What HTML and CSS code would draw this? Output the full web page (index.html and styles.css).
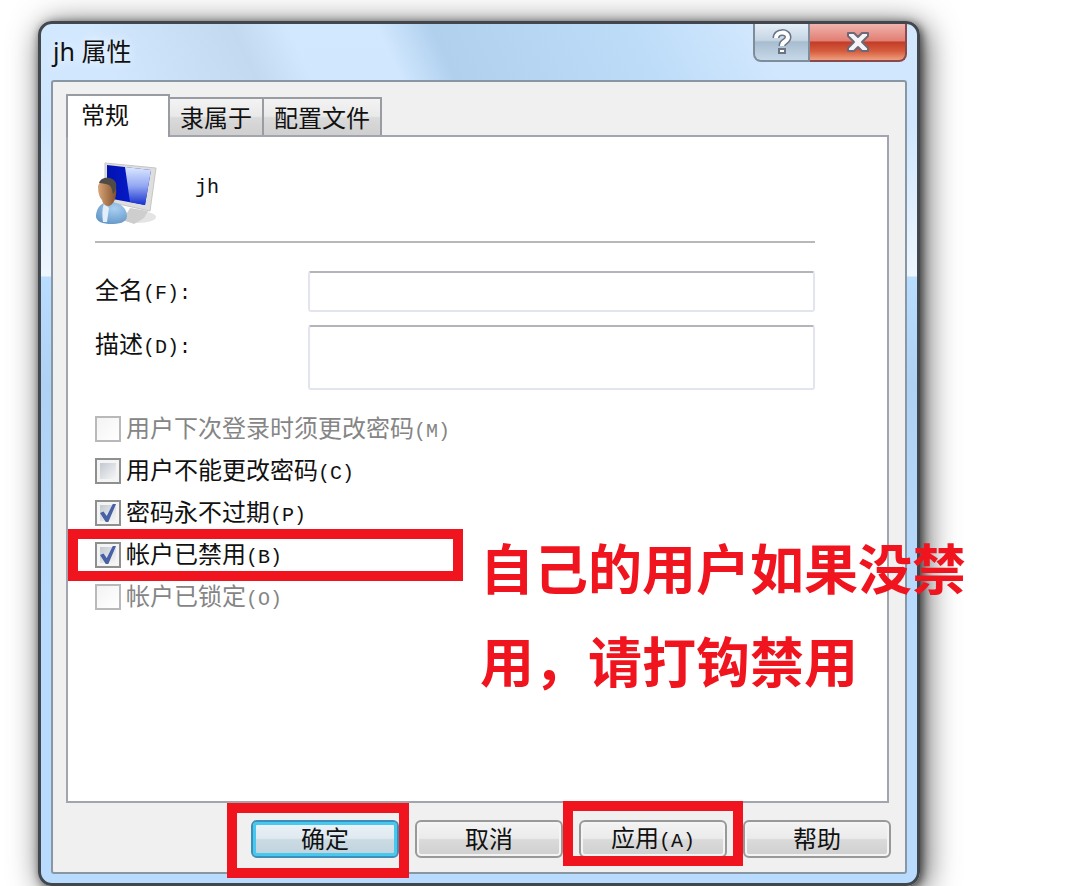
FILE: index.html
```html
<!DOCTYPE html>
<html lang="zh-CN">
<head>
  <meta charset="UTF-8">
  <meta name="viewport" content="width=device-width, initial-scale=1.0">
  <title>jh 属性</title>
  <link rel="stylesheet" href="styles.css">
</head>
<body>
  <form class="dialog">
    <header class="titlebar">
      <h1>jh 属性</h1>
      <div class="caption-buttons">
        <button type="button" class="caption-help" aria-label="帮助">
          <svg width="20" height="26" viewBox="0 0 20 26">
            <path d="M4 9C4 2 16 2 16 8c0 5-6 4-6 9" fill="none" stroke="#6b7485" stroke-width="7"/>
            <path d="M7 20h6v4H7z" fill="#fff" stroke="#6b7485" stroke-width="2"/>
            <path d="M4 9C4 2 16 2 16 8c0 5-6 4-6 9" fill="none" stroke="#fff" stroke-width="4"/>
          </svg>
        </button>
        <button type="button" class="caption-close" aria-label="关闭">
          <svg width="24" height="22" viewBox="0 0 24 22">
            <path d="M2 2h6l4 4 4-4h6v3l-6 6 6 6v3h-6l-4-4-4 4H2v-3l6-6-6-6z" fill="#f4f4f6" stroke="#6d6878" stroke-width="2" stroke-linejoin="round"/>
          </svg>
        </button>
      </div>
    </header>

    <main class="client">
      <nav class="tabs">
        <button type="button" class="tab active">常规</button>
        <button type="button" class="tab">隶属于</button>
        <button type="button" class="tab">配置文件</button>
      </nav>

      <section class="panel">
        <div class="identity">
          <svg class="user-icon" width="64" height="66" viewBox="0 0 64 66">
            <defs>
              <linearGradient id="screen" x1="0" y1="0" x2="1" y2="0">
                <stop offset="0" stop-color="#0212b0"/>
                <stop offset="1" stop-color="#0722dc"/>
              </linearGradient>
              <linearGradient id="shine" x1="0" y1="0" x2="0" y2="1">
                <stop offset="0" stop-color="#dce8ff"/>
                <stop offset="0.5" stop-color="#93a7f2"/>
                <stop offset="1" stop-color="#1730cf"/>
              </linearGradient>
              <linearGradient id="skin" x1="0" y1="0" x2="1" y2="0">
                <stop offset="0" stop-color="#d9a679"/>
                <stop offset="1" stop-color="#80502c"/>
              </linearGradient>
              <radialGradient id="shirt" cx="0.6" cy="0.3" r="0.8">
                <stop offset="0" stop-color="#a9d0f2"/>
                <stop offset="1" stop-color="#5f93c4"/>
              </radialGradient>
            </defs>
            <ellipse cx="43" cy="55" rx="18" ry="6" fill="#e4e4e4"/>
            <path d="M35 46l18 3-4 7-10 6-11-4z" fill="#cecece"/>
            <path d="M10 1l51 5-6 43-45-10z" fill="#dededc" stroke="#c6c6c4"/>
            <path d="M12 3l44 5-6 35-38-7z" fill="url(#screen)"/>
            <path d="M30 5l26 3-6 35-15-3z" fill="url(#shine)"/>
            <path d="M1 53c1-8 6-13 13-13 11 0 18 6 18 14 0 7-9 8-16 8S0 60 1 53z" fill="url(#shirt)"/>
            <path d="M9 41l5 5-2 14H8c-1-7-1-13 1-19z" fill="#e2eefa"/>
            <path d="M3 25c0-8 16-8 18 0 1 8-1 17-7 19-4 0-6-2-7-6-3-3-4-8-4-13z" fill="url(#skin)"/>
            <path d="M4 21c2-7 14-7 17 0 1 5-1 9-3 11-1-4-1-7-4-9-3-1-6-2-10-2z" fill="#504b45"/>
          </svg>
          <span class="mono">jh</span>
        </div>

        <div class="fields">
          <label for="fullname">全名<span class="mono">(F):</span></label>
          <input type="text" id="fullname">
          <label for="description">描述<span class="mono">(D):</span></label>
          <textarea id="description"></textarea>
        </div>

        <div class="options">
          <label class="option disabled">
            <input type="checkbox" disabled>
            <span>用户下次登录时须更改密码<span class="mono">(M)</span></span>
          </label>
          <label class="option">
            <input type="checkbox">
            <span>用户不能更改密码<span class="mono">(C)</span></span>
          </label>
          <label class="option">
            <input type="checkbox" checked>
            <span>密码永不过期<span class="mono">(P)</span></span>
          </label>
          <label class="option marked">
            <input type="checkbox" checked>
            <span>帐户已禁用<span class="mono">(B)</span></span>
          </label>
          <label class="option disabled">
            <input type="checkbox" disabled>
            <span>帐户已锁定<span class="mono">(O)</span></span>
          </label>
          <p class="note">自己的用户如果没禁用，请打钩禁用</p>
        </div>
      </section>

      <footer class="actions">
        <div class="action marked-ok"><button type="button" class="default">确定</button></div>
        <div class="action"><button type="button">取消</button></div>
        <div class="action marked-apply"><button type="button">应用<span class="mono">(A)</span></button></div>
        <div class="action"><button type="button">帮助</button></div>
      </footer>
    </main>
  </form>
</body>
</html>
```
FILE: styles.css
```css
*,
*::before,
*::after {
  box-sizing: border-box;
}

body {
  margin: 0;
  padding: 21px 160px 0 38px;
  background: #fff;
  color: #111;
  font: 24px/32px "Noto Sans", "Noto Sans CJK SC", sans-serif;
  overflow: hidden;
}

button,
input,
textarea {
  font: inherit;
  color: inherit;
}

.mono {
  font-family: "Liberation Mono", monospace;
  font-size: 20px;
}

.dialog {
  padding: 0 10px 9px;
  border: 3px solid #41474d;
  border-radius: 14px;
  background:
    linear-gradient(65deg, transparent 8%, #c3d9f0 24%, transparent 30%, transparent 40%, #b0d0ee 46%, #bddcf8 68%, transparent 82%) 0 0 / 100% 56px no-repeat,
    linear-gradient(#d2e8fe 0, #cfe6fe 100px, #eef6fe 252px, #b9ddff 253px, #afd1f4 360px, #b9dcfe 600px, #b9dcfe);
  box-shadow: 2px 2px 10px rgba(0, 0, 0, 0.6), 5px 5px 32px rgba(0, 0, 0, 0.7);
}

.titlebar {
  display: flex;
  justify-content: space-between;
  height: 56px;
}

.titlebar h1 {
  margin: 0;
  padding: 11px 2px;
  font-size: 25px;
  font-weight: 400;
  line-height: 32px;
  text-shadow: 0 0 12px #fff;
}

.caption-buttons {
  display: flex;
  height: 38px;
}

.caption-buttons button {
  display: flex;
  align-items: center;
  justify-content: center;
  padding: 0;
  border: 2px solid #7f8d9b;
  border-top: 0;
}

.caption-help {
  width: 57px;
  border-radius: 0 0 0 8px;
  background: linear-gradient(#e3eef8, #c6d5e3 45%, #a7bccf 50%, #c6d9ea);
}

.caption-buttons .caption-close {
  width: 97px;
  border-color: #8b4a49;
  border-left: 0;
  border-radius: 0 0 8px 0;
  background: linear-gradient(#f0b3ac, #e27e73 47%, #c23c27 50%, #d55b3c 75%, #eda080);
}

.client {
  padding: 12px 14px 14px 13px;
  border: 2px solid #8996a4;
  border-radius: 3px;
  background: #f0f0f0;
}

.tabs {
  display: flex;
  align-items: flex-end;
  height: 41px;
}

.tab {
  height: 38px;
  padding: 2px 10px 0;
  border: 2px solid #9a9ca4;
  border-left: 0;
  border-bottom: 0;
  background: linear-gradient(#f3f3f3, #e9e9e9 48%, #dadada 52%, #cfcfcf);
  line-height: 32px;
}

.tab.active {
  position: relative;
  height: 43px;
  margin-bottom: -2px;
  padding: 0 39px 4px 13px;
  border-left: 2px solid #9a9ca4;
  background: #fff;
}

.panel {
  margin-right: 2px;
  padding: 25px 72px 183px 27px;
  border: 2px solid #a2a5ad;
  background: #fff;
}

.identity {
  display: flex;
  gap: 36px;
  height: 81px;
  border-bottom: 2px solid #b8b8b8;
}

.identity .mono {
  padding-top: 10px;
}

.fields {
  display: grid;
  grid-template-columns: 200px 1fr;
  gap: 13px;
  margin-top: 28px;
}

.fields label {
  padding-top: 3px;
}

.fields input,
.fields textarea {
  display: block;
  width: 100%;
  height: 41px;
  padding: 4px 8px;
  border: 2px solid #e3e5ee;
  border-top-color: #b4b5bb;
  border-radius: 3px;
  background: #fff;
  resize: none;
}

.fields textarea {
  height: 65px;
}

.options {
  position: relative;
  margin-top: 18px;
}

.option {
  display: flex;
  align-items: center;
  gap: 5px;
  height: 42px;
}

.option > span {
  padding-top: 2px;
}

.option.disabled {
  color: #858585;
}

.option input {
  appearance: none;
  display: flex;
  align-items: center;
  justify-content: center;
  width: 26px;
  height: 26px;
  margin: 0;
  padding: 3px;
  border: 2px solid #8e8f8f;
  background: linear-gradient(135deg, #c3c9d1, #f6f6f6) content-box, #f4f4f4;
}

.option input:disabled {
  border-color: #b9b9b9;
  background: linear-gradient(135deg, #f3f3f3, #fff);
}

.option input:checked::after {
  content: "";
  flex: none;
  width: 16px;
  height: 18px;
  background: #4860a6;
  clip-path: polygon(0 50%, 22% 42%, 42% 66%, 80% 0, 100% 0, 52% 100%, 36% 100%);
}

/* red markers drawn over the dialog */
.marked,
.action {
  position: relative;
}

.marked::before,
.marked-ok::after,
.marked-apply::after {
  content: "";
  position: absolute;
  border: 10px solid #f0141e;
  pointer-events: none;
}

.marked::before {
  top: -5px;
  bottom: -5px;
  left: -27px;
  width: 395px;
}

.marked-ok::after {
  inset: -17px -10px -20px -24px;
}

.marked-apply::after {
  inset: -19px -16px -8px -16px;
}

.note {
  position: absolute;
  top: 112px;
  left: 385px;
  width: 9em;
  margin: 0;
  color: #f0141e;
  font: 700 54px/93px "Noto Sans CJK SC", sans-serif;
}

.actions {
  display: flex;
  justify-content: flex-end;
  gap: 16px;
  margin-top: 17px;
}

.actions button {
  display: block;
  width: 148px;
  height: 38px;
  padding: 0;
  border: 2px solid #999;
  border-radius: 6px;
  background: linear-gradient(#f3f3f3, #ebebeb 48%, #dadada 52%, #cfcfcf);
  box-shadow: inset 0 0 0 2px #f4f4f4;
  line-height: 32px;
}

.actions .default {
  border-color: #3c8fb8;
  background: linear-gradient(#eaf3f8, #dfe9ef 48%, #cbdbe4 52%, #bfd2dc);
  box-shadow: inset 0 0 0 3px #48c8ee;
}
```
